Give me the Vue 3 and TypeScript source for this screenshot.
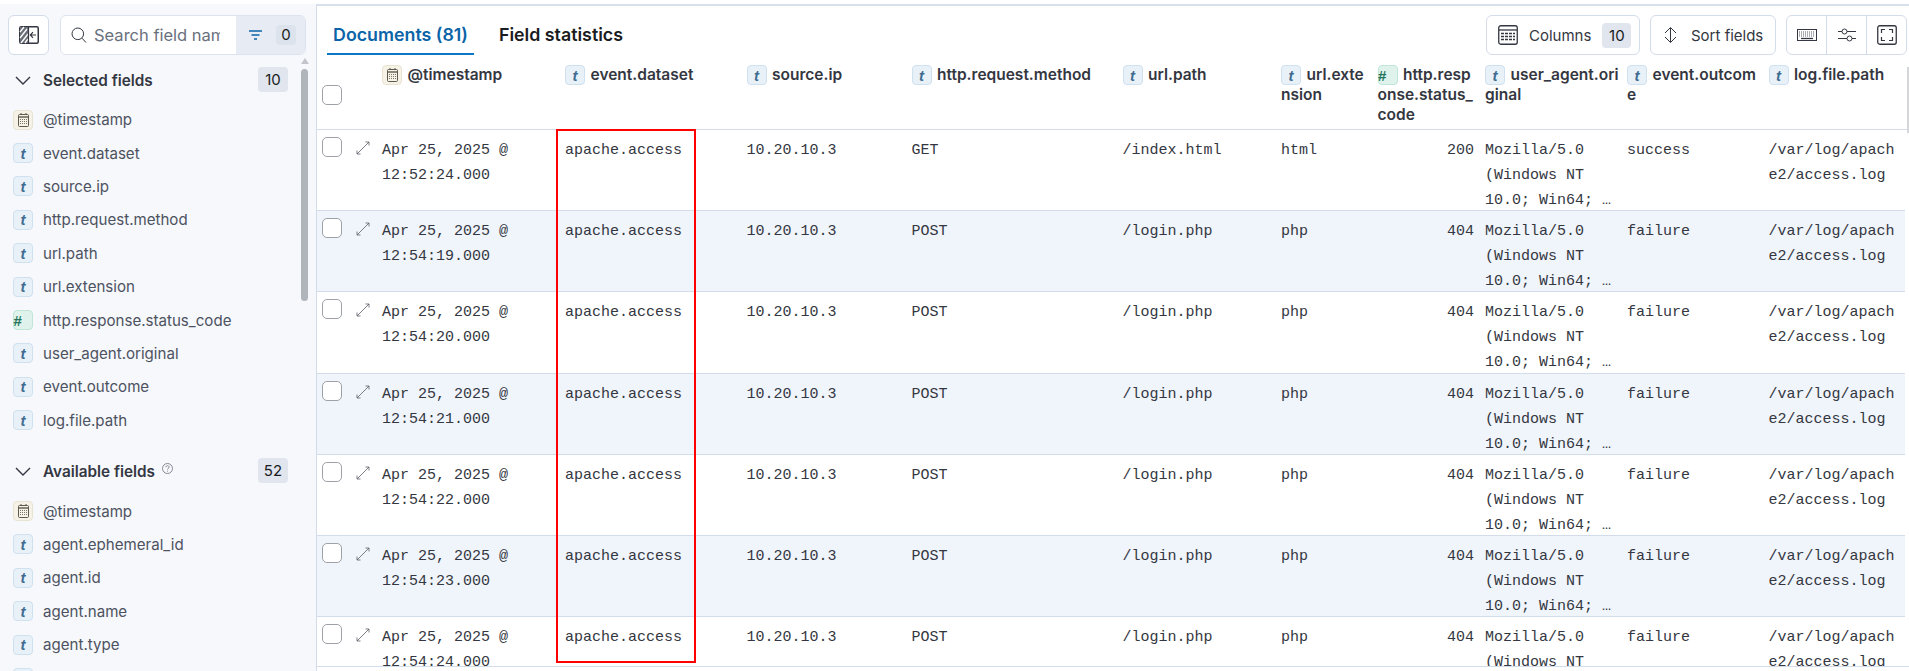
<script setup lang="ts">
interface Field { name: string; type: 'date' | 'text' | 'num' }
const selected: Field[] = [
  { name: '@timestamp', type: 'date' },
  { name: 'event.dataset', type: 'text' },
  { name: 'source.ip', type: 'text' },
  { name: 'http.request.method', type: 'text' },
  { name: 'url.path', type: 'text' },
  { name: 'url.extension', type: 'text' },
  { name: 'http.response.status_code', type: 'num' },
  { name: 'user_agent.original', type: 'text' },
  { name: 'event.outcome', type: 'text' },
  { name: 'log.file.path', type: 'text' },
]
const available: Field[] = [
  { name: '@timestamp', type: 'date' },
  { name: 'agent.ephemeral_id', type: 'text' },
  { name: 'agent.id', type: 'text' },
  { name: 'agent.name', type: 'text' },
  { name: 'agent.type', type: 'text' },
]
const ua = 'Mozilla/5.0 (Windows NT 10.0; Win64; …'
const rows = [
  { time: '12:52:24.000', method: 'GET', path: '/index.html', ext: 'html', status: 200, outcome: 'success' },
  { time: '12:54:19.000', method: 'POST', path: '/login.php', ext: 'php', status: 404, outcome: 'failure' },
  { time: '12:54:20.000', method: 'POST', path: '/login.php', ext: 'php', status: 404, outcome: 'failure' },
  { time: '12:54:21.000', method: 'POST', path: '/login.php', ext: 'php', status: 404, outcome: 'failure' },
  { time: '12:54:22.000', method: 'POST', path: '/login.php', ext: 'php', status: 404, outcome: 'failure' },
  { time: '12:54:23.000', method: 'POST', path: '/login.php', ext: 'php', status: 404, outcome: 'failure' },
  { time: '12:54:24.000', method: 'POST', path: '/login.php', ext: 'php', status: 404, outcome: 'failure' },
]
const columns: Field[] = selected
</script>

<template>
  <div class="page">
    <aside class="sidebar">
      <div class="side-top">
        <button class="collapse">
          <svg width="20" height="18" viewBox="0 0 20 18" fill="none">
            <rect x="0.75" y="0.75" width="18.5" height="16.5" rx="1.5" stroke="#343741" stroke-width="1.5" />
            <rect x="1" y="1" width="8" height="16" fill="#6b6f78" />
            <path d="M1 6l4-5M1 12L8 3M2 17l7-9M6 17l3-4" stroke="#fff" stroke-width="1.3" />
            <path d="M9.5 1v16" stroke="#343741" stroke-width="1.2" />
            <path d="M17 9h-5.5M14 6.2L11.3 9l2.7 2.8" stroke="#343741" stroke-width="1.2" />
          </svg>
        </button>
        <div class="search">
          <div class="search-input">
            <svg width="16" height="16" viewBox="0 0 16 16" fill="none">
              <circle cx="6.8" cy="6.8" r="5.8" stroke="#343741" stroke-width="1" />
              <path d="M11 11.2l4 4.3" stroke="#343741" stroke-width="1" />
            </svg>
            <span class="placeholder">Search field names</span>
          </div>
          <div class="filter">
            <svg width="13" height="10" viewBox="0 0 13 10" fill="none">
              <path d="M0 1h13M2.5 5h8M5 9h3" stroke="#0b64a8" stroke-width="1.3" />
            </svg>
            <span class="filter-count">0</span>
          </div>
        </div>
      </div>

      <section class="group first">
        <svg class="chev" width="16" height="9" viewBox="0 0 16 9" fill="none">
          <path d="M1 1l7 7 7-7" stroke="#343741" stroke-width="1.4" />
        </svg>
        <span class="group-title">Selected fields</span>
        <span class="group-count">10</span>
      </section>
      <ul class="list">
        <li v-for="f in selected" :key="f.name" class="item">
          <span class="token" :class="f.type">
            <svg v-if="f.type === 'date'" width="11" height="14" viewBox="0 0 11 14" fill="none">
              <rect x="0.5" y="1.5" width="10" height="12" rx="1" stroke="#5e5a4c" />
              <path d="M0.5 4h10" stroke="#5e5a4c" stroke-width="1.4" />
              <path d="M3 0v2M8 0v2" stroke="#5e5a4c" />
              <path d="M2 6.5h7M2 8.5h7M2 10.5h7" stroke="#7c7866" stroke-dasharray="1 1" />
            </svg>
            <template v-else-if="f.type === 'text'">t</template>
            <template v-else>#</template>
          </span>
          <span class="name">{{ f.name }}</span>
        </li>
      </ul>

      <section class="group second">
        <svg class="chev" width="16" height="9" viewBox="0 0 16 9" fill="none">
          <path d="M1 1l7 7 7-7" stroke="#343741" stroke-width="1.4" />
        </svg>
        <span class="group-title">Available fields</span>
        <svg class="help" width="11" height="11" viewBox="0 0 11 11" fill="none">
          <circle cx="5.5" cy="5.5" r="5" stroke="#69707d" stroke-width="0.8" />
          <path d="M3.9 4.2c0-2 3.2-2 3.2 0 0 1.2-1.6 1.1-1.6 2.4M5.5 7.8v.9" stroke="#69707d" stroke-width="0.8" />
        </svg>
        <span class="group-count">52</span>
      </section>
      <ul class="list">
        <li v-for="f in available" :key="f.name" class="item">
          <span class="token" :class="f.type">
            <svg v-if="f.type === 'date'" width="11" height="14" viewBox="0 0 11 14" fill="none">
              <rect x="0.5" y="1.5" width="10" height="12" rx="1" stroke="#5e5a4c" />
              <path d="M0.5 4h10" stroke="#5e5a4c" stroke-width="1.4" />
              <path d="M3 0v2M8 0v2" stroke="#5e5a4c" />
              <path d="M2 6.5h7M2 8.5h7M2 10.5h7" stroke="#7c7866" stroke-dasharray="1 1" />
            </svg>
            <template v-else>t</template>
          </span>
          <span class="name">{{ f.name }}</span>
        </li>
        <li class="item"><span class="token text"></span></li>
      </ul>

      <div class="side-scroll">
        <span class="arrow"></span>
        <span class="thumb"></span>
      </div>
    </aside>

    <main class="main">
      <div class="bar">
        <nav class="tabs">
          <span class="tab active">Documents (81)</span>
          <span class="tab">Field statistics</span>
        </nav>
        <div class="tools">
          <button class="tool columns-btn">
            <svg width="20" height="20" viewBox="0 0 20 20" fill="none">
              <rect x="0.75" y="0.75" width="18.5" height="18.5" rx="2" stroke="#343741" stroke-width="1.3" />
              <path d="M1 5h18" stroke="#343741" stroke-width="1.3" />
              <path d="M3 8.5h14M3 11.5h14M3 14.5h14" stroke="#343741" stroke-width="1.3" stroke-dasharray="3 1" />
            </svg>
            <span>Columns</span>
            <span class="tool-count">10</span>
          </button>
          <button class="tool sort-btn">
            <svg width="13" height="16" viewBox="0 0 13 16" fill="none">
              <path d="M1 6l5.500-5.500L12 6M1 10l5.500 5.500L12 10M6.500 1v14" stroke="#343741" stroke-width="1" />
            </svg>
            <span>Sort fields</span>
          </button>
          <div class="tool-group">
            <span class="cell">
              <svg width="20" height="12" viewBox="0 0 20 12" fill="none">
                <rect x="0.5" y="0.5" width="19" height="11" stroke="#343741" />
                <path d="M2 3h16M2 5h16M2 7h16" stroke="#5a5e68" stroke-dasharray="1 1" />
                <path d="M4 9.500h12" stroke="#343741" stroke-width="1.300" />
              </svg>
            </span>
            <span class="cell">
              <svg width="18" height="14" viewBox="0 0 18 14" fill="none">
                <path d="M0 3.500h4M9 3.500h9M0 10.500h9M14 10.500h4" stroke="#343741" />
                <circle cx="6.500" cy="3.500" r="2.500" stroke="#343741" />
                <circle cx="11.500" cy="10.500" r="2.500" stroke="#343741" />
              </svg>
            </span>
            <span class="cell">
              <svg width="20" height="20" viewBox="0 0 20 20" fill="none">
                <rect x="0.750" y="0.750" width="18.500" height="18.500" rx="2" stroke="#343741" stroke-width="1.300" />
                <path d="M4.500 8V4.500H8M12 4.500h3.500V8M15.500 12v3.500H12M8 15.500H4.500V12" stroke="#343741" stroke-width="1.200" />
              </svg>
            </span>
          </div>
        </div>
      </div>

      <div class="table">
        <div class="row head">
          <div class="lead"><span class="check head-check"></span></div>
          <div v-for="c in columns" :key="c.name" class="th">
            <span class="token inline" :class="c.type">
              <svg v-if="c.type === 'date'" width="11" height="14" viewBox="0 0 11 14" fill="none">
                <rect x="0.5" y="1.5" width="10" height="12" rx="1" stroke="#5e5a4c" />
                <path d="M0.5 4h10" stroke="#5e5a4c" stroke-width="1.4" />
                <path d="M3 0v2M8 0v2" stroke="#5e5a4c" />
                <path d="M2 6.5h7M2 8.5h7M2 10.5h7" stroke="#7c7866" stroke-dasharray="1 1" />
              </svg>
              <template v-else-if="c.type === 'text'">t</template>
              <template v-else>#</template>
            </span>{{ c.name }}
          </div>
        </div>
        <div v-for="(r, i) in rows" :key="r.time" class="row body" :class="{ striped: i % 2 === 1 }">
          <div class="lead">
            <span class="check"></span>
            <svg class="expand" width="14" height="14" viewBox="0 0 14 14" fill="none">
              <path d="M1 13L13 1M9.500 1H13v3.500M1 9.500V13h3.500" stroke="#5a5e68" stroke-width="0.800" />
            </svg>
          </div>
          <div class="td">Apr 25, 2025 @ {{ r.time }}</div>
          <div class="td">apache.access</div>
          <div class="td">10.20.10.3</div>
          <div class="td">{{ r.method }}</div>
          <div class="td">{{ r.path }}</div>
          <div class="td">{{ r.ext }}</div>
          <div class="td num">{{ r.status }}</div>
          <div class="td">{{ ua }}</div>
          <div class="td">{{ r.outcome }}</div>
          <div class="td">/var/log/apache2/access.log</div>
        </div>
        <div class="highlight"></div>
        <div class="table-scroll"></div>
      </div>
    </main>
  </div>
</template>

<style>
html, body { margin: 0; background: #fff; }
</style>

<style scoped>
.page {
  height: 671px;
  width: 1909px;
  box-sizing: border-box;
  margin: 0;
  padding-top: 4px;
  display: flex;
  overflow: hidden;
  font-family: Inter, "Noto Sans", sans-serif;
  color: #343741;
  position: relative;
}
.page::before {
  content: "";
  position: absolute;
  left: 0;
  right: 0;
  top: 4px;
  height: 2px;
  background: #d8e0ec;
}
.sidebar {
  width: 317px;
  flex: none;
  box-sizing: border-box;
  background: #f6f8fc;
  border-right: 1px solid #d3dce9;
  position: relative;
  overflow: hidden;
}
.side-top { display: flex; gap: 11px; padding: 11px 0 0 8px; }
button { font: inherit; color: inherit; cursor: pointer; }
.collapse {
  width: 41px;
  height: 40px;
  padding: 0;
  background: #fff;
  border: 1px solid #d3dce9;
  border-radius: 6px;
  display: flex;
  align-items: center;
  justify-content: center;
}
.search {
  width: 246px;
  height: 40px;
  box-sizing: border-box;
  display: flex;
  border: 1px solid #dde3ee;
  border-radius: 6px;
  overflow: hidden;
  background: #fff;
}
.search-input { width: 175px; flex: none; display: flex; align-items: center; padding-left: 10px; box-sizing: border-box; gap: 7px; overflow: hidden; }
.search-input svg { flex: none; }
.placeholder { font-size: 16.500px; color: #69707d; white-space: nowrap; overflow: hidden; width: 126px; flex: none; }
.filter { flex: 1; background: #e7ebf3; display: flex; align-items: center; padding-left: 13px; gap: 14px; }
.filter-count { width: 20px; height: 20px; border-radius: 4px; background: #dde3ec; font-size: 15px; line-height: 20px; text-align: center; color: #1a1c21; }
.group { display: flex; align-items: center; padding-left: 15px; height: 26px; position: relative; }
.group.first { margin-top: 12px; }
.group.second { margin-top: 21.500px; }
.group-title { margin-left: 12px; font-size: 15.300px; font-weight: 600; color: #343741; }
.help { margin: -6px 0 0 7px; }
.group-count {
  position: absolute;
  left: 258px;
  top: 0;
  width: 30px;
  height: 25px;
  background: #e0e5ee;
  border-radius: 4px;
  font-size: 15px;
  line-height: 25px;
  text-align: center;
  color: #1a1c21;
}
.list { list-style: none; margin: 10px 0 0; padding: 0; }
.item { height: 33.400px; display: flex; align-items: center; padding-left: 13px; gap: 10px; }
.name { font-size: 15.100px; color: #4d5260; white-space: nowrap; }
.token {
  width: 20px;
  height: 20px;
  flex: none;
  box-sizing: border-box;
  border: 1px solid;
  border-radius: 4px;
  display: inline-flex;
  align-items: center;
  justify-content: center;
  font-family: "Liberation Sans", sans-serif;
  font-style: italic;
  font-weight: 700;
  font-size: 15px;
  line-height: 1;
}
.token.text { background: #e9f1f8; border-color: #cfe0ee; color: #3f6c92; }
.token.num { background: #dff3ec; border-color: #bfe6d8; color: #25735a; font-size: 15px; }
.token.date { background: #f6f2e8; border-color: #e9e3d2; }
.side-scroll { position: absolute; left: 301px; top: 54px; width: 7px; }
.arrow { display: block; width: 0; height: 0; margin: 0 auto; border: 4px solid transparent; border-top: 0; border-bottom-width: 6px; border-bottom-color: #c2c5cb; }
.thumb { display: block; width: 7px; height: 232px; margin-top: 5px; border-radius: 4px; background: #b0b4bb; }

.main { flex: 1; min-width: 0; display: flex; flex-direction: column; }
.bar { height: 51px; flex: none; display: flex; justify-content: space-between; padding: 11px 2px 0 10px; box-sizing: border-box; }
.tabs { display: flex; gap: 6px; }
.tab { font-size: 17.800px; font-weight: 600; color: #1a1c21; padding: 0 6px; height: 40px; line-height: 39px; box-sizing: border-box; white-space: nowrap; }
.tab.active { color: #0b64a8; border-bottom: 2px solid #0b77c5; padding: 0; width: 147px; text-align: center; margin-right: 13px; }
.tools { display: flex; gap: 10px; }
.tool {
  height: 40px;
  box-sizing: border-box;
  background: #fff;
  border: 1px solid #d3dce9;
  border-radius: 6px;
  display: flex;
  align-items: center;
  font-size: 15px;
  color: #343741;
  padding: 0;
}
.columns-btn { width: 154px; padding-left: 11px; }
.columns-btn span:first-of-type { margin-left: 11px; }
.tool-count { margin-left: 11px; width: 29px; height: 25px; border-radius: 4px; background: #e0e5ee; line-height: 25px; text-align: center; font-size: 15px; color: #1a1c21; }
.sort-btn { width: 126px; padding-left: 13px; gap: 14px; }
.tool-group { width: 121px; height: 40px; box-sizing: border-box; border: 1px solid #d3dce9; border-radius: 6px; display: flex; }
.cell { flex: 1; display: flex; align-items: center; justify-content: center; border-left: 1px solid #d3dce9; }
.cell:first-child { border-left: 0; }

.table { position: relative; height: 612px; overflow: hidden; border-bottom: 1px solid #d3dce9; box-sizing: border-box; }
.row {
  display: grid;
  grid-template-columns: 65px 183px 181.500px 165px 211px 158.500px 96.500px 107.500px 142px 141.500px 137px;
  box-sizing: border-box;
  width: 1588px;
}
.head { height: 75px; border-bottom: 1px solid #d3dce9; width: 1592px; padding-top: 10px; }
.body { height: 81.200px; border-bottom: 1px solid #d3dce9; width: 1588px; padding-top: 8px; }
.striped { background: #f0f4fb; }
.lead { position: relative; }
.check {
  position: absolute;
  left: 5px;
  top: -1px;
  width: 20px;
  height: 20px;
  box-sizing: border-box;
  border: 1px solid #9ea1a8;
  border-radius: 5px;
  background: #fff;
}
.head-check { top: 20px; }
.expand { position: absolute; left: 39px; top: 3px; }
.th {
  font-size: 15.500px;
  font-weight: 600;
  line-height: 20px;
  color: #343741;
  padding-right: 8px;
  overflow-wrap: anywhere;
  word-break: break-all;
}
.token.inline { margin-right: 5.500px; vertical-align: top; }
.td {
  font-family: "Liberation Mono", monospace;
  font-size: 15px;
  line-height: 25px;
  color: #343741;
  padding-right: 8px;
  overflow-wrap: anywhere;
}
.num { text-align: right; padding-right: 11px; }
.highlight {
  position: absolute;
  left: 239px;
  top: 74px;
  width: 140px;
  height: 534px;
  box-sizing: border-box;
  border: 2px solid #f00;
  pointer-events: none;
}
.table-scroll { position: absolute; right: 0; top: 12px; width: 2px; height: 66px; background: #d4d6da; }
</style>
